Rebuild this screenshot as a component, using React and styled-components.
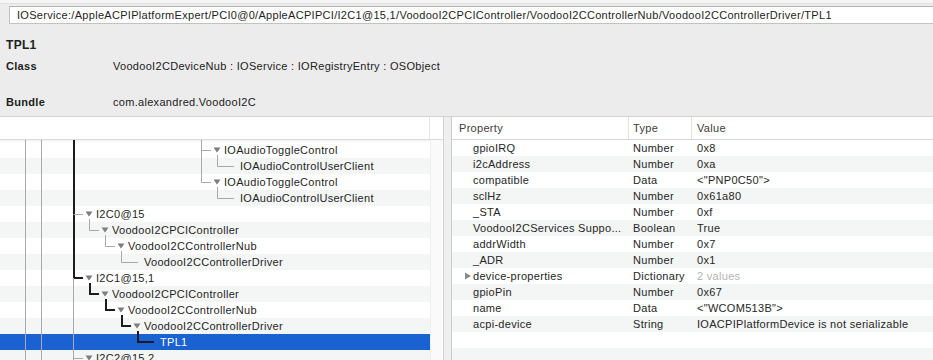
import React from 'react'
import styled, { createGlobalStyle } from 'styled-components'

const ROW = 16
const PEEK = 2
const GRAY = '#a9a9a9'
const DARK = '#1c1c1c'

const tree = [
  { label: 'IOAudioToggleControl', level: 8, open: true },
  { label: 'IOAudioControlUserClient', level: 9 },
  { label: 'IOAudioToggleControl', level: 8, open: true },
  { label: 'IOAudioControlUserClient', level: 9 },
  { label: 'I2C0@15', level: 0, open: true },
  { label: 'VoodooI2CPCIController', level: 1, open: true },
  { label: 'VoodooI2CControllerNub', level: 2, open: true },
  { label: 'VoodooI2CControllerDriver', level: 3 },
  { label: 'I2C1@15,1', level: 0, open: true, path: true },
  { label: 'VoodooI2CPCIController', level: 1, open: true, path: true },
  { label: 'VoodooI2CControllerNub', level: 2, open: true, path: true },
  { label: 'VoodooI2CControllerDriver', level: 3, open: true, path: true },
  { label: 'TPL1', level: 4, path: true, selected: true },
  { label: 'I2C2@15,2', level: 0, open: true },
]

const properties = [
  { name: 'gpioIRQ', type: 'Number', value: '0x8' },
  { name: 'i2cAddress', type: 'Number', value: '0xa' },
  { name: 'compatible', type: 'Data', value: '<"PNP0C50">' },
  { name: 'sclHz', type: 'Number', value: '0x61a80' },
  { name: '_STA', type: 'Number', value: '0xf' },
  { name: 'VoodooI2CServices Suppo...', type: 'Boolean', value: 'True' },
  { name: 'addrWidth', type: 'Number', value: '0x7' },
  { name: '_ADR', type: 'Number', value: '0x1' },
  { name: 'device-properties', type: 'Dictionary', value: '2 values', folded: true },
  { name: 'gpioPin', type: 'Number', value: '0x67' },
  { name: 'name', type: 'Data', value: '<"WCOM513B">' },
  { name: 'acpi-device', type: 'String', value: 'IOACPIPlatformDevice is not serializable' },
  {},
  {},
]

const GlobalStyle = createGlobalStyle`
  html, body {
    margin: 0;
    padding: 0;
  }
  body {
    width: 933px;
    height: 360px;
    overflow: hidden;
    background: #ececec;
    color: #222;
    font-family: 'Liberation Sans', Arial, sans-serif;
    font-size: 11px;
    letter-spacing: 0.3px;
  }
`

const Window = styled.div`
  display: flex;
  flex-direction: column;
  height: 360px;
`

const Inspector = styled.header`
  border-bottom: 1px solid #d2d2d2;
`

const TopEdge = styled.div`
  height: 3px;
  background: #f5f5f5;
  border-bottom: 1px solid #e0e0e0;
`

const PathField = styled.div`
  margin: 2px -6px 0 9px;
  height: 16px;
  line-height: 16px;
  padding-left: 7px;
  background: #fff;
  border: 1px solid #c2c2c2;
  border-top-color: #b0b0b0;
  white-space: nowrap;
  overflow: hidden;
  color: #1e1e1e;
`

const Title = styled.div`
  margin: 13px 0 0 6px;
  font-size: 12px;
  font-weight: bold;
  line-height: 16px;
`

const InfoGrid = styled.dl`
  display: grid;
  grid-template-columns: 107px 1fr;
  row-gap: 20px;
  margin: 5px 0 0 6px;
  padding-bottom: 6px;
  line-height: 16px;

  dt {
    font-weight: bold;
  }
  dd {
    margin: 0;
  }
`

const Panels = styled.div`
  flex: 1;
  display: flex;
  min-height: 0;
  overflow: hidden;
`

const TreePanel = styled.section`
  width: 443px;
  display: flex;
  flex-direction: column;
  background: #fff;
  border-right: 1px solid #d3d3d3;
`

const ColumnHeader = styled.div`
  height: 22px;
  flex-shrink: 0;
  display: flex;
  background: #fff;
  border-bottom: 1px solid #dadada;
`

const BlankHeaderCell = styled.div`
  width: 429px;
  border-right: 1px solid #e4e4e4;
`

const TreeArea = styled.div`
  flex: 1;
  display: flex;
  min-height: 0;
`

const TreeViewport = styled.div`
  position: relative;
  width: 430px;
  overflow: hidden;
`

const PeekRow = styled.div`
  height: ${PEEK}px;
  background: #f4f5f5;
`

const TreeRow = styled.div`
  display: flex;
  align-items: center;
  height: ${ROW}px;
  padding-left: ${p => 84 + 16 * p.$level}px;
  background: ${p => (p.$selected ? '#1a62d2' : p.$odd ? '#f4f5f5' : '#fff')};
  color: ${p => (p.$selected ? '#fff' : '#1f1f1f')};
  white-space: nowrap;
`

const Disclosure = styled.span`
  display: inline-flex;
  width: ${p => p.$w}px;
  height: ${ROW}px;
  flex-shrink: 0;
`

const Guides = styled.svg`
  position: absolute;
  top: 0;
  left: 0;
  pointer-events: none;
`

const ScrollTrack = styled.div`
  flex: 1;
  background: #fafafa;
  border-left: 1px solid #eeeeee;
`

const Splitter = styled.div`
  width: 7px;
  background: #efefef;
  border-right: 1px solid #cbcbcb;
`

const PropPanel = styled.section`
  flex: 1;
  display: flex;
  flex-direction: column;
  background: #fff;
  overflow: hidden;
`

const PropGrid = styled.div`
  display: grid;
  grid-template-columns: 177px 63px 1fr;
  height: ${p => (p.$head ? 22 : ROW)}px;
  line-height: ${p => (p.$head ? 22 : ROW)}px;
  flex-shrink: 0;
  background: ${p => (p.$odd ? '#f4f5f5' : '#fff')};
  border-bottom: ${p => (p.$head ? '1px solid #d6d6d6' : 'none')};
  color: ${p => (p.$head ? '#3d3d3d' : '#262626')};
`

const HeadCell = styled.div`
  padding-left: ${p => p.$pad}px;
  border-right: ${p => (p.$last ? 'none' : '1px solid #e2e2e2')};
`

const Cell = styled.div`
  display: flex;
  align-items: center;
  padding-left: ${p => p.$pad}px;
  white-space: nowrap;
  overflow: hidden;
  color: ${p => (p.$muted ? '#b3b3b3' : 'inherit')};
`

const DownTriangle = () => (
  <svg width="12" height="16" viewBox="0 0 12 16">
    <polygon points="1.5,5.5 8.5,5.5 5,10.5" fill="#7c7c7c" />
  </svg>
)

const RightTriangle = () => (
  <svg width="21" height="16" viewBox="0 0 21 16">
    <polygon points="13,4.5 13,11.5 19,8" fill="#8a8a8a" />
  </svg>
)

const TreeGuides = () => {
  const height = PEEK + tree.length * ROW
  const cy = i => PEEK + i * ROW + 8
  const pathEnd = cy(tree.findIndex(n => n.path))
  const segs = [
    <line key="g1" x1={25.5} y1={0} x2={25.5} y2={height} stroke={GRAY} />,
    <line key="g2" x1={41.5} y1={0} x2={41.5} y2={height} stroke={GRAY} />,
    <line key="p1" x1={74} y1={0} x2={74} y2={pathEnd} stroke={DARK} strokeWidth={2} />,
    <line key="p2" x1={73.5} y1={pathEnd} x2={73.5} y2={height} stroke={GRAY} />,
  ]

  tree.forEach((node, i) => {
    const L = node.level
    const dark = node.path
    const half = dark ? 0 : 0.5
    const vx = 73 + 16 * L + (dark ? 1 : 0.5)
    const y = cy(i) + half
    const xEnd = node.open ? 83 + 16 * L : 90 + 16 * L

    let y1 = 0
    for (let j = i - 1; j >= 0; j--) {
      if (tree[j].level <= L) {
        y1 = tree[j].level === L ? cy(j) : cy(j) + 5
        break
      }
    }

    const d = L === 0 ? `M${vx} ${y} H${xEnd}` : `M${vx} ${y1} V${y} H${xEnd}`
    segs.push(
      <path
        key={i}
        d={d}
        fill="none"
        stroke={dark ? DARK : GRAY}
        strokeWidth={dark ? 2 : 1}
        strokeLinejoin="miter"
      />
    )
  })

  return (
    <Guides width="430" height={height}>
      {segs}
    </Guides>
  )
}

const App = () => {
  return (
    <Window>
      <GlobalStyle />
      <Inspector>
        <TopEdge />
        <PathField>
          IOService:/AppleACPIPlatformExpert/PCI0@0/AppleACPIPCI/I2C1@15,1/VoodooI2CPCIController/VoodooI2CControllerNub/VoodooI2CControllerDriver/TPL1
        </PathField>
        <Title>TPL1</Title>
        <InfoGrid>
          <dt>Class</dt>
          <dd>VoodooI2CDeviceNub : IOService : IORegistryEntry : OSObject</dd>
          <dt>Bundle</dt>
          <dd>com.alexandred.VoodooI2C</dd>
        </InfoGrid>
      </Inspector>

      <Panels>
        <TreePanel>
          <ColumnHeader>
            <BlankHeaderCell />
          </ColumnHeader>
          <TreeArea>
            <TreeViewport>
              <PeekRow />
              {tree.map((node, i) => (
                <TreeRow key={i} $level={node.level} $odd={i % 2 === 1} $selected={node.selected}>
                  <Disclosure $w={12}>{node.open && <DownTriangle />}</Disclosure>
                  {node.label}
                </TreeRow>
              ))}
              <TreeGuides />
            </TreeViewport>
            <ScrollTrack />
          </TreeArea>
        </TreePanel>

        <Splitter />

        <PropPanel>
          <PropGrid $head>
            <HeadCell $pad={7}>Property</HeadCell>
            <HeadCell $pad={4}>Type</HeadCell>
            <HeadCell $pad={5} $last>Value</HeadCell>
          </PropGrid>
          {properties.map((prop, i) => (
            <PropGrid key={i} $odd={i % 2 === 1}>
              <Cell $pad={0}>
                <Disclosure $w={21}>{prop.folded && <RightTriangle />}</Disclosure>
                {prop.name}
              </Cell>
              <Cell $pad={4}>{prop.type}</Cell>
              <Cell $pad={5} $muted={prop.folded}>{prop.value}</Cell>
            </PropGrid>
          ))}
        </PropPanel>
      </Panels>
    </Window>
  )
}

export default App
